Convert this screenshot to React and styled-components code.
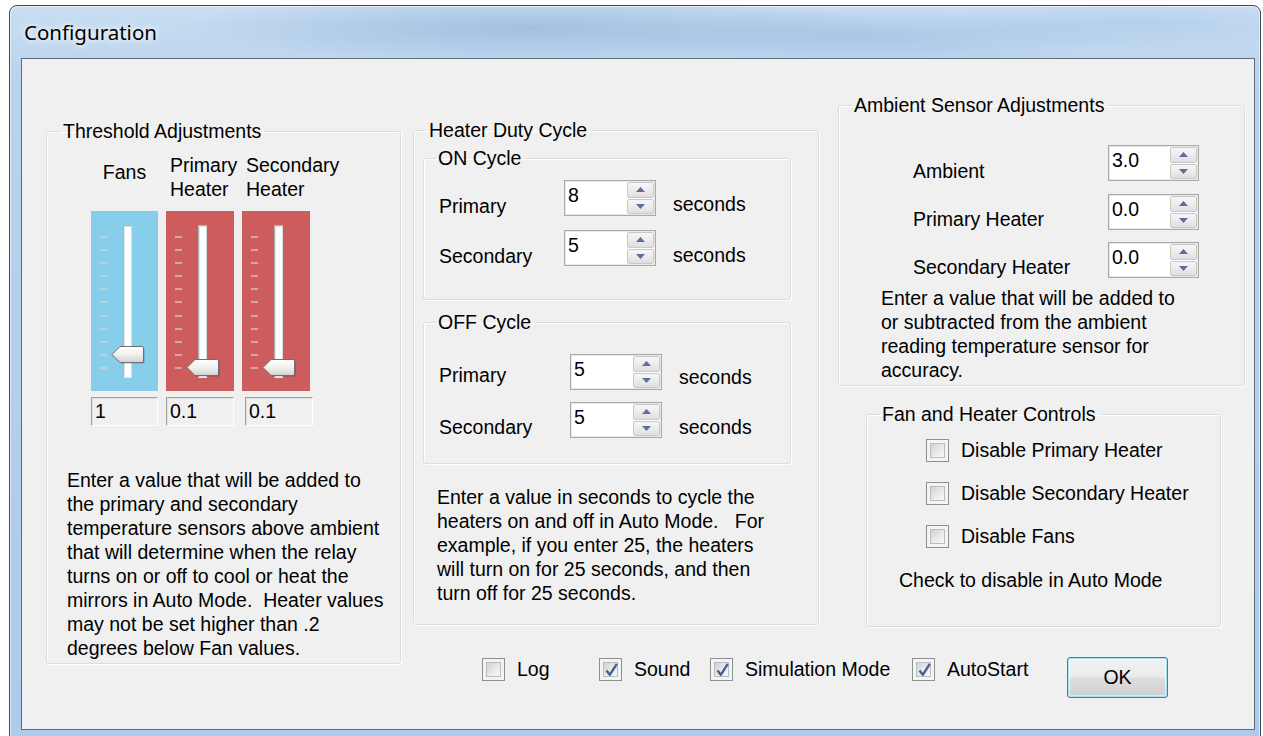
import React from 'react'
import styled, { createGlobalStyle } from 'styled-components'

const GlobalStyle = createGlobalStyle`
  html, body {
    margin: 0;
    padding: 0;
    background: #fff;
    overflow: hidden;
  }
  body {
    font-family: "Liberation Sans", Arial, sans-serif;
    color: #000;
  }
`

const UI_FONT = '19.5px'

const thresholdNote = [
  'Enter a value that will be added to',
  'the primary and secondary',
  'temperature sensors above ambient',
  'that will determine when the relay',
  'turns on or off to cool or heat the',
  'mirrors in Auto Mode.  Heater values',
  'may not be set higher than .2',
  'degrees below Fan values.',
]

const dutyNote = [
  'Enter a value in seconds to cycle the',
  'heaters on and off in Auto Mode.   For',
  'example, if you enter 25, the heaters',
  'will turn on for 25 seconds, and then',
  'turn off for 25 seconds.',
]

const ambientNote = [
  'Enter a value that will be added to',
  'or subtracted from the ambient',
  'reading temperature sensor for',
  'accuracy.',
]

const sliders = [
  { key: 'fans', color: '#87ceeb', step: 9, value: '1', w: 67, shift: 0 },
  { key: 'primary', color: '#cd5c5c', step: 10, value: '0.1', w: 68, shift: 0 },
  { key: 'secondary', color: '#cd5c5c', step: 10, value: '0.1', w: 68, shift: 3 },
]

const Window = styled.div`
  box-sizing: border-box;
  margin: 5px 0 0 9px;
  width: 1252px;
  height: 745px;
  padding: 0 5px 0 11px;
  border: 1px solid #3d4a58;
  border-radius: 8px 8px 0 0;
  box-shadow: inset 0 0 0 1px rgba(255, 255, 255, 0.55);
  background:
    radial-gradient(ellipse 360px 34px at 520px 22px, rgba(120, 158, 205, 0.45), transparent),
    radial-gradient(ellipse 260px 30px at 860px 30px, rgba(128, 165, 212, 0.35), transparent),
    radial-gradient(ellipse 200px 26px at 1120px 18px, rgba(150, 185, 225, 0.35), transparent),
    linear-gradient(180deg, #c9def2 0%, #b9d3ed 10%, #adcaea 100%);
`

const TitleBar = styled.div`
  height: 52px;
  display: flex;
  align-items: center;
  padding-left: 3px;
  font-family: "Noto Sans", "Open Sans", sans-serif;
  font-size: 20.5px;
  color: #000;
  text-shadow: 0 0 10px rgba(255, 255, 255, 0.95), 0 0 4px rgba(255, 255, 255, 0.9);
`

const Client = styled.div`
  box-sizing: border-box;
  width: 1234px;
  height: 672px;
  display: flex;
  align-items: flex-start;
  padding-left: 24px;
  border: 1px solid #5f6d7e;
  background: #f0f0f0;
  font-size: ${UI_FONT};
  line-height: 24px;
`

const Group = styled.fieldset`
  box-sizing: border-box;
  flex: none;
  min-width: 0;
  width: ${p => p.$w}px;
  height: ${p => p.$h}px;
  margin: ${p => p.$top || 0}px 0 0 ${p => p.$left || 0}px;
  padding: 0;
  border: 1px solid #d5dfe5;
  border-radius: 3px;
  box-shadow: inset 1px 1px 0 #fff, 1px 1px 0 #fff;
`

const Caption = styled.legend`
  margin-left: ${p => p.$indent}px;
  padding: 0 3px 0 2px;
  font-size: ${UI_FONT};
  line-height: 24px;
`

const Note = styled.div`
  margin: ${p => p.$top}px 0 0 ${p => p.$left}px;
  white-space: pre;
`

/* trackbars */

const SliderHeads = styled.div`
  display: flex;
  gap: 8px;
  margin: 10px 0 0 44px;
`

const Head = styled.div`
  width: ${p => p.$w}px;
  box-sizing: border-box;
  padding-left: ${p => p.$pad || 0}px;
  margin-top: ${p => p.$drop || 0}px;
  text-align: ${p => (p.$center ? 'center' : 'left')};
  white-space: nowrap;
`

const SliderRow = styled.div`
  display: flex;
  gap: 8px;
  margin: 10px 0 0 44px;
`

const SliderCol = styled.div`
  display: flex;
  flex-direction: column;
  gap: 6px;
`

const Panel = styled.div`
  position: relative;
  box-sizing: border-box;
  width: ${p => p.$w}px;
  height: 180px;
  display: flex;
  align-items: flex-start;
  padding: 14px 0 0 9px;
  background: ${p => p.$color};
`

const Ticks = styled.div`
  width: 7px;
  height: 133px;
  margin-top: 11px;
  display: flex;
  flex-direction: column;
  justify-content: space-between;
`

const Tick = styled.span`
  display: block;
  height: 2px;
  background: rgba(215, 215, 215, 0.6);
`

const Track = styled.div`
  box-sizing: border-box;
  width: 9px;
  height: 153px;
  margin-left: 16px;
  background: #fff;
  border: 1px solid #b4b4b4;
  border-right-color: #dadada;
  border-bottom-color: #e6e6e6;
  box-shadow: inset 1px 1px 0 #e2e2e2;
`

const Thumb = styled.svg`
  position: absolute;
  left: 20px;
  top: ${p => Math.round(25 + p.$step * 13.1 - 9)}px;
  width: 34px;
  height: 19px;
  overflow: visible;
`

const ValueBox = styled.div`
  box-sizing: border-box;
  width: ${p => p.$w}px;
  height: 29px;
  margin-left: ${p => p.$shift}px;
  padding-left: 3px;
  line-height: 26px;
  border: 1px solid;
  border-color: #a0a0a0 #fff #fff #a0a0a0;
  box-shadow: inset 1px 1px 0 #e3e3e3;
  background: #f0f0f0;
`

function ThumbShape({ step }) {
  return (
    <Thumb $step={step} viewBox="0 0 34 19">
      <defs>
        <linearGradient id="thumbFill" x1="0" y1="0" x2="0" y2="1">
          <stop offset="0" stopColor="#ffffff" />
          <stop offset="0.5" stopColor="#f0f0f0" />
          <stop offset="1" stopColor="#d2d2d2" />
        </linearGradient>
      </defs>
      <path d="M2 10.5 L10 2.5 H32 Q33.5 2.5 33.5 4 V17 Q33.5 18.5 32 18.5 H10 Z" fill="rgba(0,0,0,0.25)" />
      <path d="M1 9.5 L9 1.5 H31 Q32.5 1.5 32.5 3 V16 Q32.5 17.5 31 17.5 H9 Z" fill="url(#thumbFill)" stroke="#6f6f6f" strokeWidth="1" />
    </Thumb>
  )
}

function Trackbar({ color, step, w }) {
  return (
    <Panel $color={color} $w={w}>
      <Ticks>
        {Array.from({ length: 11 }, (_, i) => <Tick key={i} />)}
      </Ticks>
      <Track />
      <ThumbShape step={step} />
    </Panel>
  )
}

/* numeric up/down */

const SpinBox = styled.div`
  box-sizing: border-box;
  width: ${p => p.$w}px;
  height: 36px;
  display: flex;
  border: 1px solid #a9a9a9;
  box-shadow: inset 0 0 0 1px #e8e8e8;
  background: #fff;
`

const SpinValue = styled.div`
  flex: 1;
  padding: 2px 0 0 3px;
`

const SpinButtons = styled.div`
  width: 27px;
  margin: 1px 1px 1px 0;
  display: flex;
  flex-direction: column;
  gap: 1px;
`

const SpinButton = styled.div`
  flex: 1;
  display: flex;
  align-items: center;
  justify-content: center;
  border: 1px solid #c9c9c9;
  border-radius: 2px;
  background: linear-gradient(180deg, #f6f6f6 0%, #ececec 50%, #dfdfdf 100%);
`

const Arrow = styled.svg`
  width: 9px;
  height: 5px;
`

function Spinner({ value, w = 92 }) {
  return (
    <SpinBox $w={w}>
      <SpinValue>{value}</SpinValue>
      <SpinButtons>
        <SpinButton>
          <Arrow viewBox="0 0 9 5"><path d="M0 5 L4.5 0 L9 5 Z" fill="#5a6f9c" /></Arrow>
        </SpinButton>
        <SpinButton>
          <Arrow viewBox="0 0 9 5"><path d="M0 0 L4.5 5 L9 0 Z" fill="#5a6f9c" /></Arrow>
        </SpinButton>
      </SpinButtons>
    </SpinBox>
  )
}

const Form = styled.div`
  display: grid;
  grid-template-columns: ${p => p.$cols};
  row-gap: ${p => p.$rowGap}px;
  align-items: start;
  padding: ${p => p.$padTop}px 0 0 ${p => p.$padLeft}px;
`

const FieldLabel = styled.div`
  margin: ${p => p.$drop}px 0 0 ${p => p.$indent || 0}px;
  white-space: nowrap;
`

/* check boxes */

const CheckItem = styled.label`
  display: flex;
  align-items: center;
  gap: 12px;
  width: ${p => (p.$w ? `${p.$w}px` : 'auto')};
  flex: none;
  white-space: nowrap;
`

const CheckFrame = styled.span`
  box-sizing: border-box;
  width: 23px;
  height: 23px;
  padding: 3px;
  border: 1px solid #8e8f8f;
  background: #f4f4f4;
  display: flex;
`

const CheckInner = styled.span`
  position: relative;
  flex: 1;
  border: 1px solid #b9bcc0;
  background: linear-gradient(135deg, #cfd2d6 0%, #e9eaeb 55%, #f8f8f8 100%);
`

const CheckMark = styled.svg`
  position: absolute;
  left: 0;
  top: -2px;
  width: 15px;
  height: 17px;
  overflow: visible;
`

function CheckBox({ checked, label, w }) {
  return (
    <CheckItem $w={w}>
      <CheckFrame>
        <CheckInner>
          {checked && (
            <CheckMark viewBox="0 0 15 17">
              <path d="M2.5 9.5 L5.8 13.8 L12.8 2.8" fill="none" stroke="#4a5f97" strokeWidth="2.4" strokeLinejoin="round" />
            </CheckMark>
          )}
        </CheckInner>
      </CheckFrame>
      <span>{label}</span>
    </CheckItem>
  )
}

const CheckList = styled.div`
  display: flex;
  flex-direction: column;
  gap: 19px;
  padding: 12px 0 0 59px;
`

/* layout */

const RightArea = styled.div`
  display: flex;
  flex-direction: column;
  margin: 34px 0 0 12px;
`

const TopRow = styled.div`
  display: flex;
  align-items: flex-start;
`

const Stack = styled.div`
  display: flex;
  flex-direction: column;
  align-items: flex-start;
  margin-left: ${p => p.$left || 0}px;
`

const BottomRow = styled.div`
  display: flex;
  align-items: flex-start;
  margin-top: 30px;
  padding-left: 69px;
`

const OkButton = styled.button`
  box-sizing: border-box;
  width: 101px;
  height: 41px;
  padding: 0;
  font-family: inherit;
  font-size: ${UI_FONT};
  color: #000;
  border: 1px solid #3c7fb1;
  border-radius: 3px;
  background: linear-gradient(180deg, #f2f2f2 0%, #ebebeb 48%, #dddddd 52%, #cfcfcf 100%);
  box-shadow: inset 0 0 0 1px #a9e0f5, inset 0 0 0 2px rgba(255, 255, 255, 0.5);
`

export default function App() {
  return (
    <>
      <GlobalStyle />
      <Window>
        <TitleBar>Configuration</TitleBar>
        <Client>
          <Group $w={355} $h={545} $top={60}>
            <Caption $indent={14}>Threshold Adjustments</Caption>
            <SliderHeads>
              <Head $w={67} $center $drop={7}>Fans</Head>
              <Head $w={68} $pad={4}>Primary<br />Heater</Head>
              <Head $w={68} $pad={4}>Secondary<br />Heater</Head>
            </SliderHeads>
            <SliderRow>
              {sliders.map(s => (
                <SliderCol key={s.key}>
                  <Trackbar color={s.color} step={s.step} w={s.w} />
                  <ValueBox $w={s.w} $shift={s.shift}>{s.value}</ValueBox>
                </SliderCol>
              ))}
            </SliderRow>
            <Note $top={42} $left={20}>{thresholdNote.join('\n')}</Note>
          </Group>

          <RightArea>
            <TopRow>
              <Group $w={406} $h={507} $top={25}>
                <Caption $indent={13}>Heater Duty Cycle</Caption>
                <Group $w={368} $h={154} $top={4} $left={9}>
                  <Caption $indent={12}>ON Cycle</Caption>
                  <Form $cols="125px 92px auto" $rowGap={12} $padTop={10} $padLeft={15}>
                    <FieldLabel $drop={14}>Primary</FieldLabel>
                    <Spinner value="8" />
                    <FieldLabel $drop={12} $indent={17}>seconds</FieldLabel>
                    <FieldLabel $drop={14}>Secondary</FieldLabel>
                    <Spinner value="5" />
                    <FieldLabel $drop={13} $indent={17}>seconds</FieldLabel>
                  </Form>
                </Group>
                <Group $w={368} $h={154} $top={10} $left={9}>
                  <Caption $indent={12}>OFF Cycle</Caption>
                  <Form $cols="131px 92px auto" $rowGap={12} $padTop={20} $padLeft={15}>
                    <FieldLabel $drop={9}>Primary</FieldLabel>
                    <Spinner value="5" />
                    <FieldLabel $drop={11} $indent={17}>seconds</FieldLabel>
                    <FieldLabel $drop={13}>Secondary</FieldLabel>
                    <Spinner value="5" />
                    <FieldLabel $drop={13} $indent={17}>seconds</FieldLabel>
                  </Form>
                </Group>
                <Note $top={21} $left={23}>{dutyNote.join('\n')}</Note>
              </Group>

              <Stack $left={19}>
                <Group $w={407} $h={293}>
                  <Caption $indent={13}>Ambient Sensor Adjustments</Caption>
                  <Form $cols="195px 91px" $rowGap={11} $padTop={28} $padLeft={74}>
                    <FieldLabel $drop={14}>Ambient</FieldLabel>
                    <Spinner value="3.0" w={91} />
                    <FieldLabel $drop={13}>Primary Heater</FieldLabel>
                    <Spinner value="0.0" w={91} />
                    <FieldLabel $drop={13}>Secondary Heater</FieldLabel>
                    <Spinner value="0.0" w={91} />
                  </Form>
                  <Note $top={7} $left={42}>{ambientNote.join('\n')}</Note>
                </Group>
                <Group $w={355} $h={225} $top={16} $left={28}>
                  <Caption $indent={13}>Fan and Heater Controls</Caption>
                  <CheckList>
                    <CheckBox label="Disable Primary Heater" />
                    <CheckBox label="Disable Secondary Heater" />
                    <CheckBox label="Disable Fans" />
                  </CheckList>
                  <Note $top={20} $left={32}>Check to disable in Auto Mode</Note>
                </Group>
              </Stack>
            </TopRow>

            <BottomRow>
              <CheckBox label="Log" w={117} />
              <CheckBox label="Sound" checked w={111} />
              <CheckBox label="Simulation Mode" checked w={202} />
              <CheckBox label="AutoStart" checked w={155} />
              <OkButton>OK</OkButton>
            </BottomRow>
          </RightArea>
        </Client>
      </Window>
    </>
  )
}
